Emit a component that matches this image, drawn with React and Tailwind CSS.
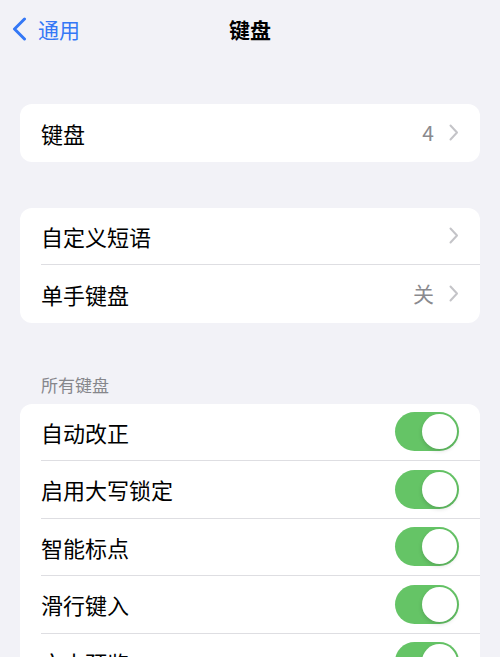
import React from "react";

const font = { fontFamily: '"Noto Sans CJK SC", "Noto Sans", sans-serif' };

function Chevron() {
  return (
    <svg width="10" height="17" viewBox="0 0 10 17" fill="none" className="shrink-0">
      <path d="M1.5 1.5 L8 8.5 L1.5 15.5" stroke="#c4c4c8" strokeWidth="2" strokeLinecap="round" strokeLinejoin="round" />
    </svg>
  );
}

function Toggle() {
  return (
    <div className="w-[64px] h-[39px] rounded-full bg-[#65c466] flex items-center justify-end p-[2px] shrink-0">
      <div className="w-[35px] h-[35px] rounded-full bg-white shadow-[0_2px_4px_rgba(0,0,0,0.15)]" />
    </div>
  );
}

function Row({ label, value, chevron, toggle, last }) {
  return (
    <div className="h-[57.5px] pl-[21px] flex">
      <div className={`flex-1 flex items-center pr-[21px] ${last ? "" : "border-b border-[#dedee2]"}`}>
        <span className="flex-1 text-[22px] text-black leading-none">{label}</span>
        {value && <span className="text-[21px] text-[#8a8a8e] leading-none mr-[15px]">{value}</span>}
        {chevron && <Chevron />}
        {toggle && <Toggle />}
      </div>
    </div>
  );
}

export default function App() {
  return (
    <div className="w-[500px] h-[657px] overflow-hidden bg-[#f2f2f7]" style={font}>
      <div className="h-[58px] grid grid-cols-3 items-center px-[12px]">
        <div className="flex items-center gap-[11px] text-[#3478f6]">
          <svg width="15" height="24" viewBox="0 0 15 24" fill="none">
            <path d="M12.5 2 L2.5 12 L12.5 22" stroke="#3478f6" strokeWidth="3" strokeLinecap="round" strokeLinejoin="round" />
          </svg>
          <span className="text-[21px] leading-none">通用</span>
        </div>
        <div className="text-center text-[21px] font-bold text-black leading-none">键盘</div>
        <div />
      </div>

      <div className="px-[20px] mt-[46px]">
        <div className="bg-white rounded-[12px] overflow-hidden">
          <Row label="键盘" value="4" chevron last />
        </div>

        <div className="bg-white rounded-[12px] overflow-hidden mt-[46px]">
          <Row label="自定义短语" chevron />
          <Row label="单手键盘" value="关" chevron last />
        </div>

        <div className="pt-[51px] pb-[8px] pl-[21px] text-[17px] leading-[22px] text-[#86868b]">所有键盘</div>

        <div className="bg-white rounded-[12px] overflow-hidden">
          <Row label="自动改正" toggle />
          <Row label="启用大写锁定" toggle />
          <Row label="智能标点" toggle />
          <Row label="滑行键入" toggle />
          <Row label="文本预览" toggle />
        </div>
      </div>
    </div>
  );
}
